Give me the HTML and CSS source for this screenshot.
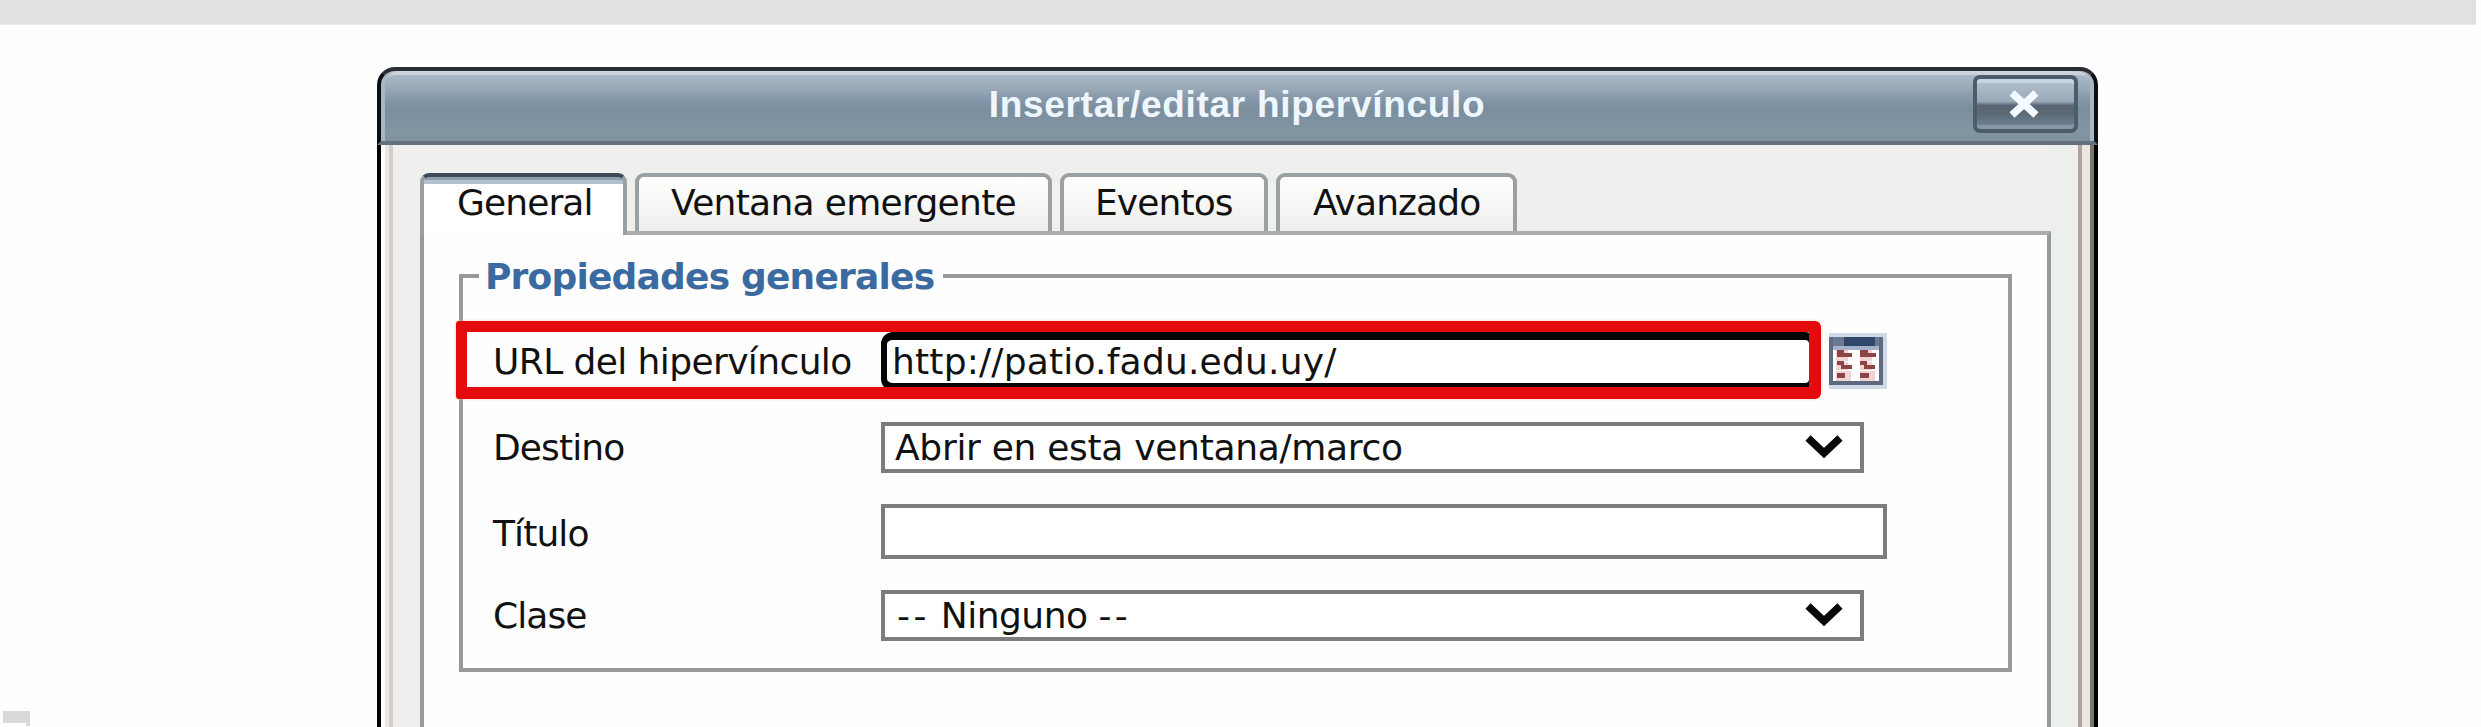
FILE: index.html
```html
<!DOCTYPE html>
<html lang="es">
<head>
<meta charset="utf-8">
<title>Insertar/editar hipervínculo</title>
<link rel="stylesheet" href="styles.css">
</head>
<body>
<div class="topbar"></div>
<main class="dialog">
  <header class="titlebar">
    <h1 class="title">Insertar/editar hipervínculo</h1>
    <button class="close" aria-label="Cerrar">
      <svg width="34" height="30" viewBox="0 0 34 30"><path d="M5 4L29 26M29 4L5 26" fill="none" stroke="#f4faff" stroke-width="7.5"/></svg>
    </button>
  </header>
  <div class="body">
    <div class="frame-left"></div>
    <div class="content">
      <nav class="tabs">
        <span class="tab tab-active">General</span>
        <span class="tab tab-popup">Ventana emergente</span>
        <span class="tab tab-events">Eventos</span>
        <span class="tab tab-advanced">Avanzado</span>
      </nav>
      <section class="panel">
        <div class="group">
          <h2 class="legend"><span class="legend-text">Propiedades generales</span></h2>
          <div class="row row-url">
            <label class="label label-url">URL del hipervínculo</label>
            <div class="field field-focus">http://patio.fadu.edu.uy/</div>
            <svg class="browse" width="58" height="56" viewBox="0 0 58 56">
              <rect x="0" y="0" width="58" height="56" fill="#d0d9e8"/>
              <rect x="0" y="4" width="54" height="48" fill="#5d6b82"/>
              <rect x="4" y="4" width="46" height="12" fill="#6a7893"/>
              <rect x="15" y="4" width="31" height="9" fill="#30476c"/>
              <rect x="4" y="13" width="46" height="4" fill="#a5b1ca"/>
              <rect x="4" y="17" width="46" height="31" fill="#fff"/>
              <path d="M7 17h12v11H7zM31 17h12v11H31zM7 29h12v8H7zM31 29h12v8H31zM7 38h15v10H7zM31 38h15v10H31z" fill="#f2d3d3"/>
              <path d="M8 17h7v3h8v4H8zM31 17h8v3h8v4h-16zM8 28h7v4h8v4H12v-4H8zM31 28h7v4h8v4H35v-4h-4zM8 40h8v5H8zM31 40h9v5H31z" fill="#8b4545"/>
            </svg>
            <div class="highlight"></div>
          </div>
          <div class="row">
            <label class="label">Destino</label>
            <div class="field select"><span class="value-target">Abrir en esta ventana/marco</span>
              <svg class="chevron" width="38" height="26" viewBox="0 0 38 26"><path d="M3 4L19 19L35 4" fill="none" stroke="#080808" stroke-width="7.5"/></svg>
            </div>
          </div>
          <div class="row row-text">
            <label class="label label-low">Título</label>
            <div class="field input"></div>
          </div>
          <div class="row">
            <label class="label">Clase</label>
            <div class="field select"><span class="value-class"><span class="dashes">--</span> Ninguno <span class="dashes">--</span></span>
              <svg class="chevron" width="38" height="26" viewBox="0 0 38 26"><path d="M3 4L19 19L35 4" fill="none" stroke="#080808" stroke-width="7.5"/></svg>
            </div>
          </div>
        </div>
      </section>
    </div>
    <div class="frame-right"></div>
  </div>
</main>
<svg class="corner-mark" width="27" height="15" viewBox="0 0 27 15"><path d="M0 0H27V15H23V12H0z" fill="#d9d9d9"/></svg>
</body>
</html>
```
FILE: styles.css
```css
* { box-sizing: border-box; }

body {
  position: relative;
  margin: 0;
  height: 727px;
  overflow: hidden;
  display: flex;
  flex-direction: column;
  background: #fefefe;
  color: #111;
  font: 36px/52px "DejaVu Sans", Verdana, sans-serif;
  letter-spacing: -0.9px;
}

.topbar {
  flex: none;
  width: 2476px;
  height: 25px;
  background: #e1e1e1;
  border-bottom: 1px solid #ececec;
}

.dialog {
  flex: 1;
  width: 1721px;
  margin: 42px 0 0 377px;
  display: flex;
  flex-direction: column;
}

.titlebar {
  flex: none;
  height: 78px;
  padding: 4px 16px 0 20px;
  display: flex;
  align-items: flex-start;
  border: 4px solid #0a1015;
  border-top-color: #2a2e32;
  border-bottom-color: #65717c;
  border-radius: 18px 18px 0 0;
  box-shadow: inset 4px 0 #aab6c0, inset -4px 0 #aab6c0, inset 0 4px #cbd4dc;
  background: linear-gradient(#aab8c6 4px, #98a8b7 18px, #8498aa 28px, #7b8e9e 38px, #8295a3 60px, #81919e 70px) padding-box;
}

.title {
  flex: 1;
  margin: 0 0 0 100px;
  text-align: center;
  color: #eef6ff;
  font: bold 37px/60px "Liberation Sans", Arial, sans-serif;
  letter-spacing: 0.7px;
}

.close {
  width: 105px;
  height: 58px;
  padding: 0 4px 0 0;
  display: flex;
  align-items: center;
  justify-content: center;
  border: 4px solid #4b5c6a;
  border-radius: 7px;
  box-shadow: inset 0 4px #c9d5e1, inset 0 -4px #8797a5;
  background: linear-gradient(#b5c3d1, #99a8b6 45%, #586572 53%, #5b6974 68%, #71879a);
}

.body {
  flex: 1;
  display: flex;
  background: #efefed;
}

.frame-left {
  width: 43px;
  background: linear-gradient(90deg, #000 4px, #fff 4px 8px, #ede8e6 8px 12px, #d2cfcd 12px 16px, #efefed 16px);
}

.frame-right {
  width: 47px;
  background: linear-gradient(90deg, #edefed 16px, #f3eeeb 27px, #aaa59f 27px 31px, #eee6e1 31px 39px, #7a7671 39px 43px, #000 43px);
}

.content {
  flex: 1;
  display: flex;
  flex-direction: column;
  padding-top: 28px;
}

.tabs {
  display: flex;
  gap: 8px;
  height: 58px;
}

.tab {
  height: 58px;
  border: 4px solid #9ba1a2;
  border-bottom: 0;
  border-radius: 9px 9px 0 0;
  background: linear-gradient(#fff, #eeeeec);
  line-height: 51px;
  white-space: nowrap;
  padding-left: 31px;
}

.tab-active {
  position: relative;
  width: 207px;
  height: 62px;
  padding-left: 33px;
  border-color: #3d4b57 #97a0a5 #97a0a5;
  background: linear-gradient(#8f9eaf 3px, #b4c2d0 3px 7px, #fff 7px);
}

.tab-popup { width: 417px; padding-left: 32px; letter-spacing: -0.7px; }
.tab-events { width: 208px; }
.tab-advanced { width: 241px; padding-left: 33px; }

.panel {
  flex: 1;
  padding: 39px 35px 0;
  border: 4px solid #969a98;
  border-top-color: #a9adab;
  border-bottom: 0;
  background: #fefefe;
}

.group {
  height: 398px;
  border: 4px solid #979a98;
  padding-left: 418px;
}

.legend {
  height: 54px;
  margin: 0 0 0 -402px;
  font: bold 36px/52px "DejaVu Sans", Verdana, sans-serif;
  letter-spacing: -0.8px;
}

.legend-text {
  display: block;
  width: 464px;
  height: 54px;
  padding-left: 6px;
  position: relative;
  top: -27px;
  background: #fefefe;
  color: #3a6aa0;
  white-space: nowrap;
}

.row {
  position: relative;
  height: 51px;
  margin: 0 0 31px -418px;
  padding-left: 30px;
  display: flex;
  align-items: center;
}

.row-url { height: 59px; }
.row-text { height: 55px; }

.label { width: 388px; white-space: nowrap; }
.label-url { letter-spacing: -0.6px; }
.label-low { padding-top: 5px; }

.field {
  height: 100%;
  border: 4px solid #7d7d7d;
  background: #fff;
  white-space: nowrap;
}

.field-focus {
  width: 936px;
  padding-left: 5px;
  border: 8px solid #050505;
  border-left-width: 6px;
  border-radius: 12px;
  line-height: 43px;
  letter-spacing: 0.2px;
}

.select {
  width: 983px;
  display: flex;
  align-items: center;
  justify-content: space-between;
  padding: 1px 17px 0 10px;
}

.value-target { letter-spacing: -0.3px; }
.value-class { padding-left: 2px; letter-spacing: -0.5px; }
.dashes { letter-spacing: 3.4px; }
.chevron { margin-top: -3px; }
.input { width: 1006px; }
.browse { margin-left: 12px; margin-top: -2px; }

.highlight {
  position: absolute;
  left: -7px;
  top: -11px;
  width: 1365px;
  height: 78px;
  border: 11px solid #e30b0e;
  border-right-width: 12px;
  border-bottom-width: 12px;
  border-radius: 3px 6px 6px 3px;
  box-shadow: 0 0 3px #f8b5b5;
}

.corner-mark {
  position: absolute;
  left: 3px;
  top: 711px;
}
```
